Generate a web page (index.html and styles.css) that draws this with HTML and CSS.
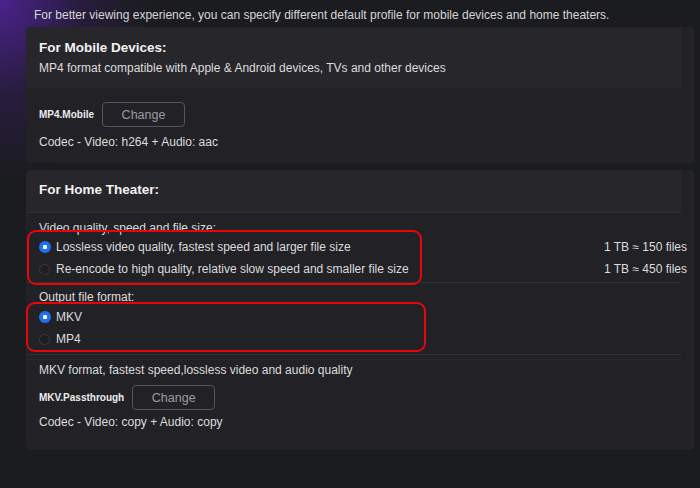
FILE: index.html
```html
<!DOCTYPE html>
<html lang="en">
<head>
  <meta charset="UTF-8" />
  <title>Profile Settings</title>
  <link rel="stylesheet" href="styles.css">
</head>
<body>
  <div class="page">
    <p class="intro">For better viewing experience, you can specify different default profile for mobile devices and home theaters.</p>

    <div class="card">
      <div class="card-head">
        <div class="title">For Mobile Devices:</div>
        <div class="sub">MP4 format compatible with Apple &amp; Android devices, TVs and other devices</div>
      </div>
      <div class="card-body">
        <div class="profile-row">
          <span class="profile-name">MP4.Mobile</span>
          <button class="change-btn">Change</button>
        </div>
        <div class="codec">Codec - Video: h264 + Audio: aac</div>
      </div>
    </div>

    <div class="card home">
      <div class="card-head short">
        <div class="title">For Home Theater:</div>
      </div>
      <div class="group">
        <div class="group-label">Video quality, speed and file size:</div>
        <label class="opt">
          <span class="radio checked"></span>
          <span class="opt-text">Lossless video quality, fastest speed and larger file size</span>
          <span class="opt-note">1 TB ≈ 150 files</span>
        </label>
        <label class="opt">
          <span class="radio"></span>
          <span class="opt-text">Re-encode to high quality, relative slow speed and smaller file size</span>
          <span class="opt-note">1 TB ≈ 450 files</span>
        </label>
      </div>
      <div class="group format">
        <div class="group-label">Output file format:</div>
        <label class="opt">
          <span class="radio checked"></span>
          <span class="opt-text">MKV</span>
        </label>
        <label class="opt">
          <span class="radio"></span>
          <span class="opt-text">MP4</span>
        </label>
      </div>
      <div class="group last">
        <div class="group-label">MKV format, fastest speed,lossless video and audio quality</div>
        <div class="profile-row">
          <span class="profile-name">MKV.Passthrough</span>
          <button class="change-btn">Change</button>
        </div>
        <div class="codec tight">Codec - Video: copy + Audio: copy</div>
      </div>
    </div>

    <div class="mark mark-quality"></div>
    <div class="mark mark-format"></div>
  </div>
</body>
</html>
```

FILE: styles.css
```css
* { box-sizing: border-box; }
body {
  margin: 0;
  height: 488px;
  overflow: hidden;
  font-family: 'Liberation Sans', Arial, sans-serif;
  font-size: 12px;
  color: #dcdcdc;
  background: #1b1c20;
}
.page {
  position: relative;
  height: 100%;
  padding: 7px 6px 0 26px;
  background:
    radial-gradient(ellipse 150px 180px at 0 0, rgba(88, 36, 168, 0.8), rgba(60, 28, 110, 0.35) 55%, rgba(27, 28, 32, 0) 100%),
    #1b1c20;
}
.intro {
  margin: 0 0 4px 8px;
  line-height: 16px;
  color: #d6d6d6;
}
.card {
  background: #222226;
  border-radius: 5px;
  padding-right: 13px;
  box-shadow: inset -3px 0 0 #25252a;
}
.card-head {
  background: #27272b;
  border-top-left-radius: 5px;
  padding: 11px 13px 12px;
}
.card-head.short {
  padding: 10px 13px 12px;
  border-bottom: 1px solid #2f2f34;
}
.title {
  font-size: 13.5px;
  font-weight: bold;
  line-height: 20px;
  color: #f2f2f2;
}
.sub {
  margin-top: 2px;
  line-height: 16px;
}
.card-body {
  padding: 14px 13px 13px;
}
.profile-row {
  display: flex;
  align-items: center;
  gap: 8px;
}
.profile-name {
  font-size: 10px;
  font-weight: bold;
  color: #ececec;
}
.change-btn {
  width: 83px;
  height: 25px;
  background: transparent;
  border: 1px solid #55565c;
  border-radius: 4px;
  color: #9a9aa0;
  font-family: inherit;
  font-size: 12.5px;
  padding: 0;
}
.codec {
  margin-top: 7px;
  line-height: 16px;
}
.codec.tight {
  margin-top: 4px;
}
.card.home {
  margin-top: 7px;
}
.group {
  padding: 7px 7px 2px 13px;
  border-bottom: 1px solid #2f2f34;
}
.group.format {
  padding-top: 6px;
  padding-bottom: 4px;
}
.group.format .group-label {
  margin-bottom: 1px;
}
.group.last {
  border-bottom: none;
  border-top: 1px solid #28282d;
  margin-top: 4px;
  padding-top: 2px;
  padding-bottom: 20px;
}
.group-label {
  line-height: 16px;
}
.group.last .group-label {
  margin-bottom: 7px;
}
.opt {
  display: flex;
  align-items: center;
  height: 22px;
  margin-right: -13px;
}
.radio {
  width: 11px;
  height: 11px;
  border-radius: 50%;
  border: 1px solid #3a3a40;
  background: #1e1e22;
  margin-right: 6px;
  flex: none;
}
.radio.checked {
  border: none;
  width: 12px;
  height: 12px;
  margin-right: 5px;
  background: radial-gradient(circle, #ffffff 0 2px, #1f6ff2 2.5px);
}
.opt-text {
  flex: 1;
}
.mark {
  position: absolute;
  border: 2px solid #e8060d;
  border-radius: 9px;
}
.mark-quality {
  left: 27px;
  top: 230px;
  width: 395px;
  height: 55px;
}
.mark-format {
  left: 26px;
  top: 302px;
  width: 400px;
  height: 50px;
}
```
